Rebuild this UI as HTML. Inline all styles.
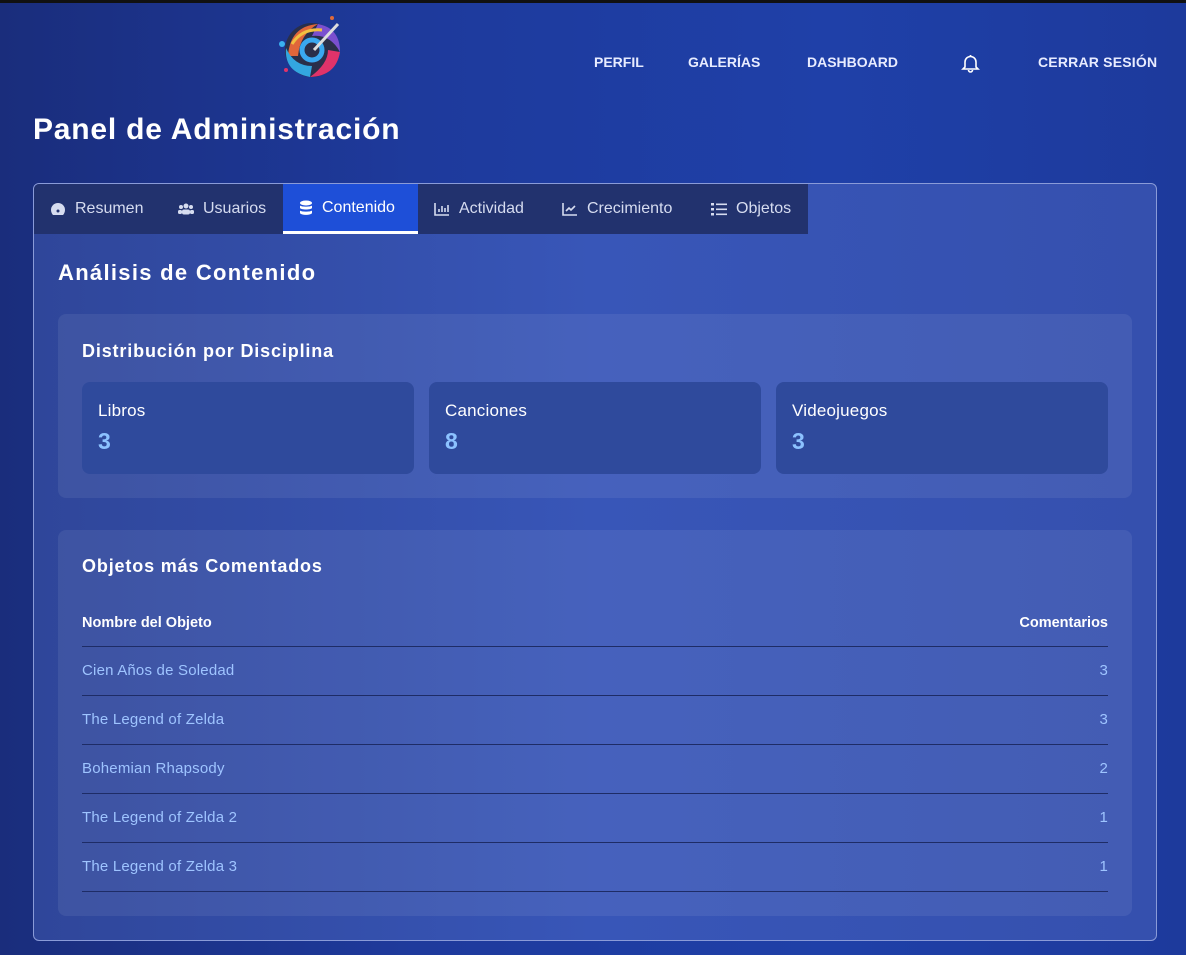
<!DOCTYPE html>
<html><head><meta charset="utf-8"><style>
*{margin:0;padding:0;box-sizing:border-box}
body{width:1186px;height:955px;overflow:hidden;font-family:"Liberation Sans",sans-serif;background:linear-gradient(90deg,#1a2d7c 0%,#1e3a9c 35%,#1f40a8 70%,#1d3a9c 100%);position:relative;color:#fff}
.top{position:absolute;left:0;top:0;width:1186px;height:3px;background:#111}
.nav a{position:absolute;top:54px;font-weight:bold;font-size:14px;color:#e8ecff;letter-spacing:0;text-decoration:none}
h1{position:absolute;left:33px;top:113px;font-size:30px;letter-spacing:0.8px;font-weight:bold}
.panel{position:absolute;left:33px;top:183px;width:1124px;height:758px;border:1px solid #8a9bd8;border-radius:6px;background:linear-gradient(90deg,#2f469a,#3856b8 50%,#3550ae);overflow:hidden}
.tabs{position:absolute;left:0;top:0;width:774px;height:50px;background:#22326e;display:flex}
.tab{height:50px;display:flex;align-items:center;padding:0 0 0 16px;font-size:16px;color:#d6dcf0;letter-spacing:0;flex:none}
.tab.act{background:#1e4fd8;color:#fff;border-bottom:3px solid #fff}
.tab svg{margin-right:9px}
h2{position:absolute;left:24px;top:76px;font-size:22px;letter-spacing:1.3px}
.box{position:absolute;left:24px;width:1074px;background:rgba(255,255,255,0.07);border-radius:8px}
.box h3{position:absolute;left:24px;font-size:18px;letter-spacing:0.85px}
.card{position:absolute;top:68px;width:332px;height:92px;background:#2f4a9c;border-radius:8px}
.card .l{position:absolute;left:16px;top:19px;font-size:17px;letter-spacing:0.2px}
.card .n{position:absolute;left:16px;top:46px;font-size:23px;font-weight:bold;color:#8cc2ff}
table{position:absolute;left:24px;top:71px;width:1026px;border-collapse:collapse}
th{font-size:14.5px;text-align:left;height:45px;border-bottom:1px solid #1e2c66;letter-spacing:0;vertical-align:middle}
td{height:49px;font-size:15px;color:#9ec4ff;border-bottom:1px solid #1e2c66;letter-spacing:0.2px}
.r{text-align:right}
</style></head><body>
<div class="top"></div>
<svg style="position:absolute;left:272px;top:14px" width="82" height="70" viewBox="0 0 82 70">
<circle cx="40" cy="36" r="27" fill="#2a2f4a"/>
<path d="M16 42 Q18 12 46 10 Q28 20 26 42Z" fill="#e0663a"/>
<path d="M46 10 Q68 14 68 38 Q58 20 40 22Z" fill="#7a4fcf"/>
<path d="M68 38 Q64 62 38 63 Q56 50 56 36Z" fill="#e0336a"/>
<path d="M38 63 Q12 58 14 34 Q22 52 40 52Z" fill="#33a6e0"/>
<path d="M20 30 Q30 14 50 16" stroke="#f0c040" stroke-width="3" fill="none"/>
<circle cx="40" cy="36" r="10" fill="none" stroke="#3aa8f0" stroke-width="5"/>
<line x1="42" y1="36" x2="66" y2="10" stroke="#ddd" stroke-width="3"/>
<circle cx="10" cy="30" r="3" fill="#3ab0f0"/><circle cx="60" cy="4" r="2" fill="#e06a3a"/><circle cx="14" cy="56" r="2" fill="#e0336a"/>
</svg>
<div class="nav"><a style="left:594px">PERFIL</a><a style="left:688px">GALERÍAS</a><a style="left:807px">DASHBOARD</a><a style="left:1038px;letter-spacing:0.2px">CERRAR SESIÓN</a></div>
<svg style="position:absolute;left:961px;top:53px" width="19" height="20" viewBox="0 0 19 20" fill="none" stroke="#fff" stroke-width="1.6"><path d="M4 14V9a5.5 5.5 0 0 1 11 0v5l2 2H2z"/><path d="M7.5 17a2 2 0 0 0 4 0"/><path d="M9.5 2v1.5"/></svg>
<h1>Panel de Administración</h1>
<div class="panel">
<div class="tabs">
<div class="tab" style="width:128px"><svg width="16" height="14" viewBox="0 0 16 14"><path d="M8 1a7 7 0 0 0-7 7c0 2 1 4 2 5h10c1-1 2-3 2-5a7 7 0 0 0-7-7z" fill="#d6dcf0"/><circle cx="8" cy="9" r="1.5" fill="#22326e"/></svg>Resumen</div>
<div class="tab" style="width:121px"><svg width="16" height="12" viewBox="0 0 16 12" fill="#d6dcf0"><circle cx="8" cy="3" r="2.5"/><circle cx="3" cy="4" r="2"/><circle cx="13" cy="4" r="2"/><rect x="4" y="6.5" width="8" height="5" rx="2"/><rect x="0" y="7" width="4" height="4" rx="1.5"/><rect x="12" y="7" width="4" height="4" rx="1.5"/></svg>Usuarios</div>
<div class="tab act" style="width:135px"><svg width="14" height="16" viewBox="0 0 14 16" fill="#fff"><ellipse cx="7" cy="3" rx="6" ry="2.5"/><path d="M1 5.5c1 1.5 11 1.5 12 0V8c-1 2-11 2-12 0z"/><path d="M1 10.5c1 1.5 11 1.5 12 0V13c-1 2.5-11 2.5-12 0z"/></svg>Contenido</div>
<div class="tab" style="width:128px"><svg width="16" height="14" viewBox="0 0 16 14" fill="none" stroke="#d6dcf0" stroke-width="1.6"><path d="M1 1v12h14"/><path d="M5 10V7M8 10V4M11 10V6M14 10V3"/></svg>Actividad</div>
<div class="tab" style="width:149px"><svg width="16" height="14" viewBox="0 0 16 14" fill="none" stroke="#d6dcf0" stroke-width="1.6"><path d="M1 1v12h14"/><path d="M4 9l3-3 2 2 4-4"/></svg>Crecimiento</div>
<div class="tab" style="width:113px"><svg width="16" height="14" viewBox="0 0 16 14" fill="#d6dcf0"><rect x="0" y="1" width="3" height="2.5"/><rect x="0" y="6" width="3" height="2.5"/><rect x="0" y="11" width="3" height="2.5"/><rect x="5" y="1.5" width="11" height="1.6"/><rect x="5" y="6.5" width="11" height="1.6"/><rect x="5" y="11.5" width="11" height="1.6"/></svg>Objetos</div>
</div>
<h2>Análisis de Contenido</h2>
<div class="box" style="top:130px;height:184px">
<h3 style="top:27px">Distribución por Disciplina</h3>
<div class="card" style="left:24px"><div class="l">Libros</div><div class="n">3</div></div>
<div class="card" style="left:371px"><div class="l">Canciones</div><div class="n">8</div></div>
<div class="card" style="left:718px"><div class="l">Videojuegos</div><div class="n">3</div></div>
</div>
<div class="box" style="top:346px;height:386px">
<h3 style="top:26px">Objetos más Comentados</h3>
<table>
<tr><th>Nombre del Objeto</th><th class="r">Comentarios</th></tr>
<tr><td>Cien Años de Soledad</td><td class="r">3</td></tr>
<tr><td>The Legend of Zelda</td><td class="r">3</td></tr>
<tr><td>Bohemian Rhapsody</td><td class="r">2</td></tr>
<tr><td>The Legend of Zelda 2</td><td class="r">1</td></tr>
<tr><td>The Legend of Zelda 3</td><td class="r">1</td></tr>
</table>
</div>
</div>
</body></html>
